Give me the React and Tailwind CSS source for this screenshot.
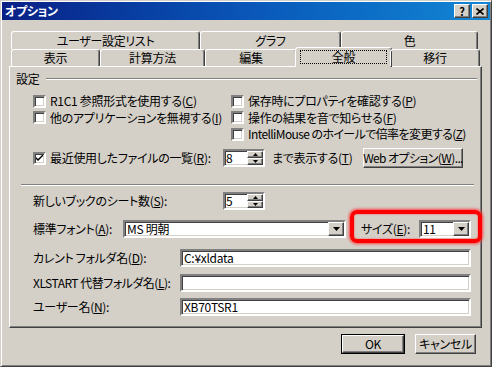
import React from 'react';

const sunken =
  'border-2 border-t-[#808080] border-l-[#808080] border-r-white border-b-white shadow-[inset_1px_1px_0_#404040,inset_-1px_-1px_0_#d4d0c8]';
const raised =
  'border border-t-white border-l-white border-r-[#404040] border-b-[#404040] shadow-[inset_-1px_-1px_0_#808080]';

const Arrow = () => (
  <svg width="7" height="4" viewBox="0 0 7 4" className="block">
    <polygon points="0,0 7,0 3.5,4" fill="#000" />
  </svg>
);

const Check = ({ checked }) => (
  <span className={`w-[13px] h-[13px] bg-white flex items-center justify-center shrink-0 ${sunken}`}>
    {checked && (
      <svg width="7" height="7" viewBox="0 0 7 7" className="block">
        <path d="M0 2 L0 4 L2 6 L7 1 L7 -1 L2 4 Z" fill="#000" />
      </svg>
    )}
  </span>
);

const Spin = ({ value }) => (
  <div className={`w-[42px] h-[18px] bg-white flex shrink-0 ${sunken}`}>
    <span className="flex-1 flex items-center pl-[1px]">{value}</span>
    <div className="w-[16px] flex flex-col">
      <div className={`h-[7px] bg-[#d4d0c8] flex items-center justify-center ${raised}`}>
        <svg width="5" height="3" viewBox="0 0 5 3" className="block"><polygon points="0,3 5,3 2.5,0" fill="#000" /></svg>
      </div>
      <div className={`h-[7px] bg-[#d4d0c8] flex items-center justify-center ${raised}`}>
        <svg width="5" height="3" viewBox="0 0 5 3" className="block"><polygon points="0,0 5,0 2.5,3" fill="#000" /></svg>
      </div>
    </div>
  </div>
);

const Combo = ({ value, width }) => (
  <div className={`${width} h-[18px] bg-white flex shrink-0 ${sunken}`}>
    <span className="flex-1 flex items-center pl-[2px]">{value}</span>
    <div className={`w-[16px] bg-[#d4d0c8] flex items-center justify-center ${raised}`}>
      <Arrow />
    </div>
  </div>
);

const Field = ({ value }) => (
  <div className={`w-[291px] h-[18px] bg-white flex items-center pl-[2px] shrink-0 ${sunken}`}>{value}</div>
);

const BackTab = ({ label, width }) => (
  <div
    className={`${width} h-full flex items-center justify-center border-t border-l border-white border-r border-r-[#404040] shadow-[inset_-1px_0_0_#808080] rounded-t-[3px]`}
  >
    {label}
  </div>
);

const App = () => {
  return (
    <div className="w-[492px] h-[367px] bg-[#d4d0c8] border border-t-[#d4d0c8] border-l-[#d4d0c8] border-r-[#404040] border-b-[#404040] shadow-[inset_1px_1px_0_#fff,inset_-1px_-1px_0_#808080] p-[1px] flex flex-col text-[12px] leading-none tracking-[-0.3px] whitespace-nowrap text-black font-['MS_UI_Gothic','Noto_Sans_CJK_JP',sans-serif] [font-feature-settings:'palt'] overflow-hidden">
      {/* title bar */}
      <div className="h-[18px] flex items-center justify-between pl-[3px] pr-[2px] bg-linear-to-r from-[#0a1f86] via-[#0a56b8] to-[#1486d4]">
        <span className="text-white font-bold">オプション</span>
        <div className="flex gap-[2px]">
          <div className={`w-[16px] h-[14px] bg-[#d4d0c8] flex items-center justify-center font-bold text-[11px] ${raised}`}>?</div>
          <div className={`w-[16px] h-[14px] bg-[#d4d0c8] flex items-center justify-center ${raised}`}>
            <svg width="8" height="7" viewBox="0 0 8 7" className="block">
              <path d="M0.5 0.5 L7.5 6.5 M7.5 0.5 L0.5 6.5" stroke="#000" strokeWidth="1.6" />
            </svg>
          </div>
        </div>
      </div>

      {/* tabs */}
      <div className="mt-[11px] ml-[9px] h-[18px] flex">
        <BackTab label="ユーザー設定リスト" width="w-[189px]" />
        <BackTab label="グラフ" width="w-[141px]" />
        <BackTab label="色" width="w-[137px]" />
      </div>
      <div className="ml-[9px] h-[17px] flex relative z-10">
        <BackTab label="表示" width="w-[89px]" />
        <BackTab label="計算方法" width="w-[105px]" />
        <BackTab label="編集" width="w-[92px]" />
        <div className="-ml-[2px] -mt-[2px] w-[97px] h-[20px] bg-[#d4d0c8] flex pt-[2px] px-[4px] pb-[3px] border-t border-l border-white border-r border-r-[#404040] shadow-[inset_-1px_0_0_#808080] rounded-t-[3px]">
          <span className="flex-1 flex items-center justify-center border border-dotted border-black">全般</span>
        </div>
        <div className="-ml-[2px] w-[90px] h-full">
          <BackTab label="移行" width="w-[90px]" />
        </div>
      </div>

      {/* panel */}
      <div className="ml-[7px] w-[473px] h-[262px] flex flex-col border-t border-l border-white border-r border-b border-r-[#404040] border-b-[#404040] shadow-[inset_-1px_-1px_0_#808080]">
        <div className="mt-[5px] h-[14px] flex items-center pl-[6px]">
          <span>設定</span>
          <div className="flex-1 ml-[7px] mr-[4px] border-t border-t-[#808080] border-b border-b-white" />
        </div>

        <div className="mt-[7px] flex flex-col pl-[23px]">
          <div className="h-[16px] flex items-center">
            <div className="w-[198px] flex items-center gap-[4px]">
              <Check />
              <span>R1C1 参照形式を使用する(<u>C</u>)</span>
            </div>
            <div className="flex items-center gap-[4px]">
              <Check />
              <span>保存時にプロパティを確認する(<u>P</u>)</span>
            </div>
          </div>
          <div className="h-[17px] flex items-center">
            <div className="w-[198px] flex items-center gap-[4px]">
              <Check />
              <span>他のアプリケーションを無視する(<u>I</u>)</span>
            </div>
            <div className="flex items-center gap-[4px]">
              <Check />
              <span>操作の結果を音で知らせる(<u>F</u>)</span>
            </div>
          </div>
          <div className="h-[16px] flex items-center">
            <div className="w-[198px]" />
            <div className="flex items-center gap-[4px]">
              <Check />
              <span className="tracking-[-0.6px]">IntelliMouse のホイールで倍率を変更する(<u>Z</u>)</span>
            </div>
          </div>
        </div>

        <div className="mt-[5px] h-[22px] flex items-center pl-[23px]">
          <div className="w-[190px] flex items-center gap-[4px]">
            <Check checked />
            <span>最近使用したファイルの一覧(<u>R</u>):</span>
          </div>
          <Spin value="8" />
          <span className="ml-[7px] w-[91px]">まで表示する(<u>T</u>)</span>
          <div className={`w-[100px] h-[20px] flex items-center justify-center tracking-[-0.6px] ${raised}`}>
            Web オプション(<u>W</u>)...
          </div>
        </div>

        <div className="mt-[15px] ml-[11px] w-[453px] border-t border-t-[#808080] border-b border-b-white" />

        <div className="mt-[6px] h-[18px] flex items-center pl-[23px]">
          <span className="w-[190px]">新しいブックのシート数(<u>S</u>):</span>
          <Spin value="5" />
        </div>

        <div className="mt-[10px] h-[18px] flex items-center pl-[23px]">
          <span className="w-[90px]">標準フォント(<u>A</u>):</span>
          <Combo value="MS 明朝" width="w-[223px]" />
          <div className="ml-[15px] flex items-center relative">
            <span className="w-[58px]">サイズ(<u>E</u>):</span>
            <Combo value="11" width="w-[52px]" />
            <div className="absolute -left-[11px] -top-[10px] w-[132px] h-[33px] border-[4px] border-[#ff0000] rounded-[7px] shadow-[0_0_3px_1px_#ff4040,inset_0_0_2px_#ff4040]" />
          </div>
        </div>

        <div className="mt-[11px] h-[18px] flex items-center pl-[23px]">
          <span className="w-[147px]">カレント フォルダ名(<u>D</u>):</span>
          <Field value="C:¥xldata" />
        </div>
        <div className="mt-[7px] h-[18px] flex items-center pl-[23px]">
          <span className="w-[147px] tracking-[-0.5px]">XLSTART 代替フォルダ名(<u>L</u>):</span>
          <Field value="" />
        </div>
        <div className="mt-[6px] h-[18px] flex items-center pl-[23px]">
          <span className="w-[147px]">ユーザー名(<u>N</u>):</span>
          <Field value="XB70TSR1" />
        </div>
      </div>

      {/* buttons */}
      <div className="mt-[6px] flex justify-end gap-[10px] pr-[14px]">
        <div className="w-[64px] h-[20px] border border-black">
          <div className={`w-full h-full flex items-center justify-center ${raised}`}>OK</div>
        </div>
        <div className={`w-[61px] h-[20px] flex items-center justify-center ${raised}`}>キャンセル</div>
      </div>
    </div>
  );
};

export default App;
